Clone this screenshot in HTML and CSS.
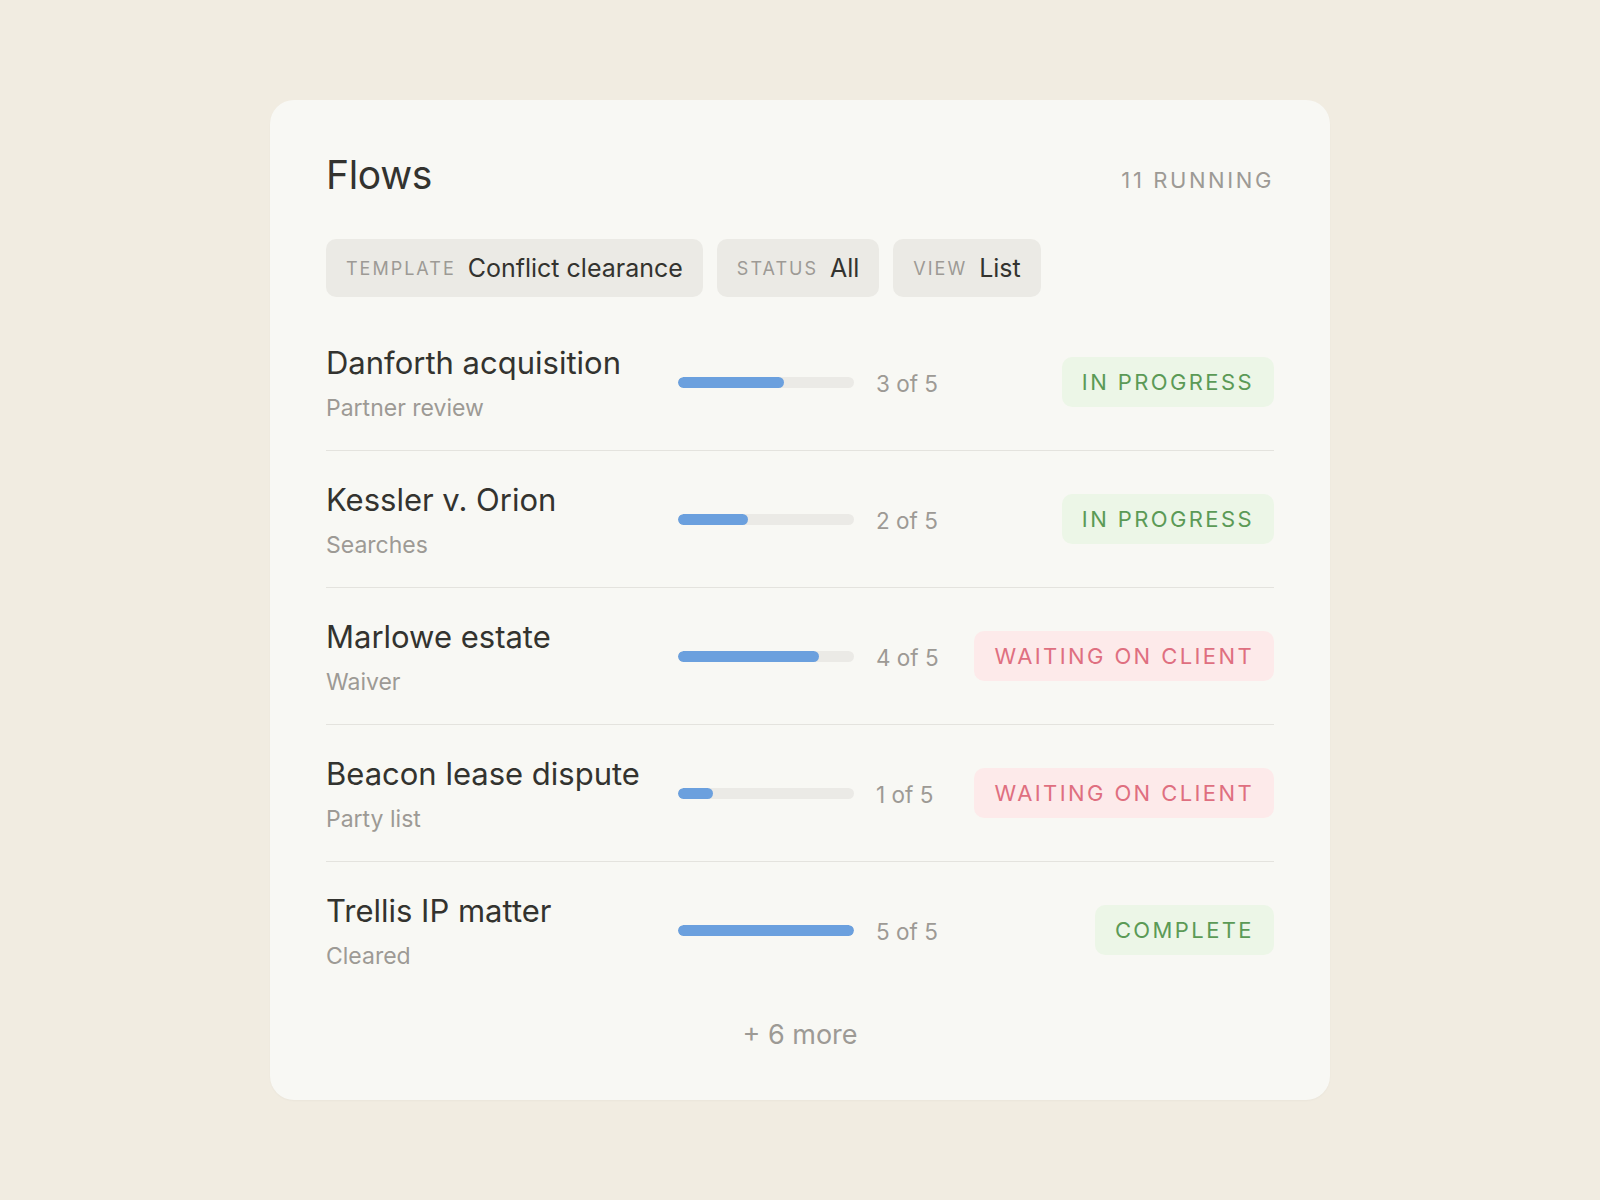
FILE: index.html
```html
<!DOCTYPE html>
<html lang="en">
<head>
  <meta charset="UTF-8" />
  <title>Flows</title>
  <meta name="viewport" content="width=device-width, initial-scale=1.0" />
  <link rel="stylesheet" href="styles.css">
</head>
<body>
  <div class="card">
    <div class="card-header">
      <h1>Flows</h1>
      <div class="running">11 running</div>
    </div>

    <div class="filters">
      <div class="chip"><span class="chip-label">Template</span><span class="chip-value">Conflict clearance</span></div>
      <div class="chip"><span class="chip-label">Status</span><span class="chip-value">All</span></div>
      <div class="chip"><span class="chip-label">View</span><span class="chip-value">List</span></div>
    </div>

    <div class="flow-list">
      <div class="flow">
        <div class="flow-name">
          <div class="flow-title">Danforth acquisition</div>
          <div class="flow-step">Partner review</div>
        </div>
        <div class="bar"><div class="bar-fill" style="width: 60%"></div></div>
        <div class="count">3 of 5</div>
        <div class="status-cell"><span class="badge ok">In progress</span></div>
      </div>
      <div class="flow">
        <div class="flow-name">
          <div class="flow-title">Kessler v. Orion</div>
          <div class="flow-step">Searches</div>
        </div>
        <div class="bar"><div class="bar-fill" style="width: 40%"></div></div>
        <div class="count">2 of 5</div>
        <div class="status-cell"><span class="badge ok">In progress</span></div>
      </div>
      <div class="flow">
        <div class="flow-name">
          <div class="flow-title">Marlowe estate</div>
          <div class="flow-step">Waiver</div>
        </div>
        <div class="bar"><div class="bar-fill" style="width: 80%"></div></div>
        <div class="count">4 of 5</div>
        <div class="status-cell"><span class="badge wait">Waiting on client</span></div>
      </div>
      <div class="flow">
        <div class="flow-name">
          <div class="flow-title">Beacon lease dispute</div>
          <div class="flow-step">Party list</div>
        </div>
        <div class="bar"><div class="bar-fill" style="width: 20%"></div></div>
        <div class="count">1 of 5</div>
        <div class="status-cell"><span class="badge wait">Waiting on client</span></div>
      </div>
      <div class="flow">
        <div class="flow-name">
          <div class="flow-title">Trellis IP matter</div>
          <div class="flow-step">Cleared</div>
        </div>
        <div class="bar"><div class="bar-fill" style="width: 100%"></div></div>
        <div class="count">5 of 5</div>
        <div class="status-cell"><span class="badge ok">Complete</span></div>
      </div>
    </div>

    <div class="more">+ 6 more</div>
  </div>
</body>
</html>
```

FILE: styles.css
```css
:root {
  --page: #f1ece1;
  --card: #f8f8f4;
  --ink: #33332f;
  --muted: #9d9a95;
  --chip: #ebeae5;
  --line: #e4e3de;
  --blue: #6ba0de;
  --track: #ebeae6;
  --green: #5b9a56;
  --green-bg: #ecf6e7;
  --red: #df6f80;
  --red-bg: #fdeaea;
}

body {
  font-family: Inter, "Noto Sans", sans-serif;
  background: var(--page);
  color: var(--ink);
  margin: 0;
  padding: 100px 0;
  display: flex;
  justify-content: center;
}

.card {
  background: var(--card);
  border-radius: 24px;
  width: 1060px;
  height: 1000px;
  box-sizing: border-box;
  padding: 52px 56px 0;
  box-shadow: 0 1px 2px rgba(0,0,0,0.03);
}

.card-header {
  display: flex;
  justify-content: space-between;
  align-items: center;
  height: 44px;
}

.card-header h1 {
  margin: 0;
  font-size: 39px;
  font-weight: 400;
  letter-spacing: -0.3px;
}

.running {
  font-size: 22px;
  letter-spacing: 2.6px;
  text-transform: uppercase;
  color: var(--muted);
  margin-top: 12px;
}

.filters {
  display: flex;
  gap: 14px;
  margin-top: 43px;
}

.chip {
  background: var(--chip);
  border-radius: 10px;
  height: 58px;
  padding: 0 20px;
  display: flex;
  align-items: center;
  gap: 12px;
}

.chip-label {
  font-size: 18px;
  letter-spacing: 2px;
  text-transform: uppercase;
  color: var(--muted);
}

.chip-value {
  font-size: 25px;
  color: var(--ink);
}

.flow-list {
  margin-top: 17px;
}

.flow {
  display: grid;
  grid-template-columns: 352px 176px 1fr auto;
  align-items: center;
  height: 136px;
  border-bottom: 1px solid var(--line);
}

.flow:last-child {
  border-bottom: none;
}

.flow-title {
  font-size: 31px;
  line-height: 40px;
  margin-top: 1px;
}

.flow-step {
  font-size: 23px;
  line-height: 30px;
  margin-top: 10px;
  color: var(--muted);
}

.bar {
  height: 11px;
  border-radius: 6px;
  background: var(--track);
  overflow: hidden;
}

.bar-fill {
  height: 100%;
  border-radius: 6px;
  background: var(--blue);
}

.count {
  font-size: 22.5px;
  color: var(--muted);
  padding-left: 22px;
  margin-top: 3px;
}

.badge {
  display: inline-block;
  font-size: 22px;
  line-height: 50px;
  padding: 0 20px;
  border-radius: 10px;
  letter-spacing: 2.4px;
  text-transform: uppercase;
}

.badge.ok {
  background: var(--green-bg);
  color: var(--green);
}

.badge.wait {
  background: var(--red-bg);
  color: var(--red);
}

.more {
  text-align: center;
  font-size: 27px;
  color: var(--muted);
  margin-top: 20px;
}
```
